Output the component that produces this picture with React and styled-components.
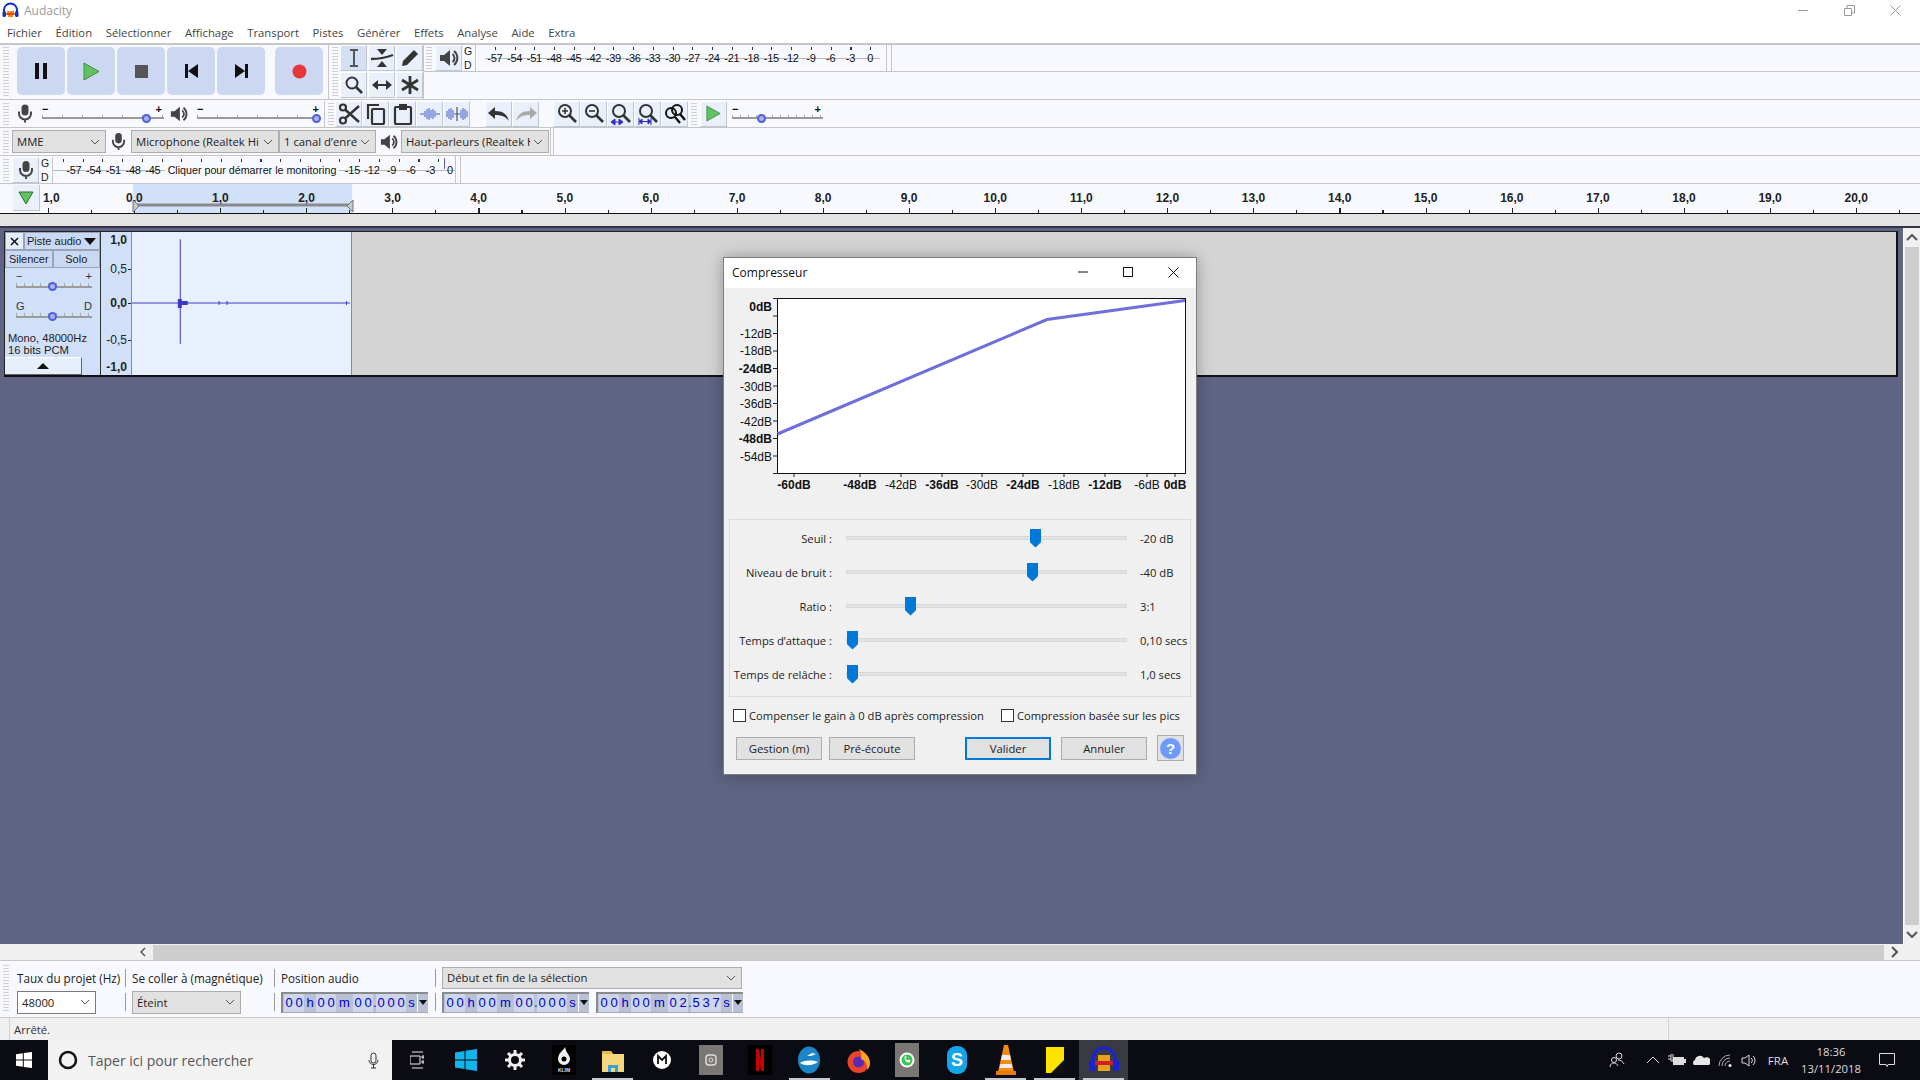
import React from "react";
import styled, { createGlobalStyle } from "styled-components";

const UI = `"Open Sans", "Noto Sans", sans-serif`;
const AR = `"Liberation Sans", Arial, sans-serif`;

const Global = createGlobalStyle`
  html, body { margin: 0; padding: 0; background: #f8f9ff; overflow: hidden; }
  #root { width: 1920px; height: 1080px; }
  * { box-sizing: border-box; }
`;

const Page = styled.div`
  position: relative; width: 1920px; height: 1080px; overflow: hidden;
  display: flex; flex-direction: column; background: #fff; font-family: ${UI}; color: #111;
`;
const TitleBar = styled.div`
  height: 21px; display: flex; align-items: center; padding-left: 2px; background: #fff; position: relative;
`;
const AppName = styled.span`margin-left: 5px; font-size: 12px; color: #999;`;
const WinControls = styled.div`
  margin-left: auto; display: flex; align-items: center; height: 20px; padding-right: 19px; gap: 35px;
`;
const MenuBar = styled.div`
  height: 22px; display: flex; align-items: center; padding-left: 7px; gap: 13.6px; background: #fff;
  font-size: 11.3px; color: #444;
`;
const MenuItem = styled.span`white-space: nowrap;`;

const TopRows = styled.div`
  height: 57px; display: flex; background: #f8f9ff; border-top: 2px solid #c6c6c6; border-bottom: 1px solid #c6c6c6;
`;
const Group = styled.div`
  width: ${p => p.$w ? p.$w + "px" : "auto"}; flex: ${p => p.$w ? "none" : 1};
  display: flex; align-items: ${p => p.$align || "flex-start"}; padding-left: ${p => p.$pl || 0}px;
  padding-top: ${p => p.$pt || 0}px; border-right: ${p => p.$edge ? "1px solid #c6c6c6" : "none"};
`;
const Grip = styled.div`
  flex: none; width: 6px; margin-left: ${p => p.$ml ?? 3}px; height: ${p => p.$h || 22}px;
  align-self: center;
  background: repeating-linear-gradient(to bottom, #cfcfcf 0 1px, transparent 1px 3px);
`;
const TransportBtn = styled.div`
  flex: none; width: 48px; height: 48px; margin-left: ${p => p.$ml ?? 2}px; margin-top: 2px;
  border-radius: 5px; background: #ccd8f1; display: flex; align-items: center; justify-content: center;
`;
const ToolGrid = styled.div`
  display: grid; grid-template-columns: repeat(3, 27px); grid-auto-rows: 26px; gap: 1px; margin-left: 2px;
`;
const Btn = styled.div`
  flex: none; width: ${p => p.$w || 27}px; height: ${p => p.$h || 26}px; margin-left: ${p => p.$ml || 0}px;
  display: flex; align-items: center; justify-content: center;
  background: ${p => p.$on ? "#d3dff3" : "#eaf0fb"};
  border-right: 1px solid #c0c5d2; border-bottom: 1px solid #c0c5d2; border-top: 1px solid #fff; border-left: 1px solid #fff;
`;
const MeterColumn = styled.div`flex: 1; display: flex; flex-direction: column;`;
const MeterRow = styled.div`
  height: 27px; display: flex; border-bottom: 1px solid #c6c6c6; align-items: flex-start;
`;
const GD = styled.div`
  flex: none; width: 12px; margin-left: ${p => p.$ml ?? 2}px; height: 26px; display: flex; flex-direction: column;
  justify-content: space-between; font: 10.5px/12px ${AR}; color: #222; border-right: 1px solid #c6c6c6;
`;
const Scale = styled.div`
  position: relative; flex: none; width: ${p => p.$w}px; height: 26px; margin-left: ${p => p.$ml || 0}px;
  padding-left: ${p => p.$pl || 0}px;
  display: flex; align-items: center;
  background:
    linear-gradient(#b8b8b8, #b8b8b8) 0 13px / 100% 1px no-repeat,
    repeating-linear-gradient(to right, #333 0 1px, transparent 1px 19.75px) 10px 2px / 100% 3px no-repeat;
`;
const ScaleMark = styled.span`
  flex: none; width: ${p => p.$w || 19.75}px; text-align: center; font: 11px/12px ${AR}; letter-spacing: -0.2px; color: #111;
`;
const DoubleDivider = styled.div`
  flex: none; width: ${p => p.$w || 6}px; margin-left: ${p => p.$ml ?? 2}px; height: 100%;
  border-left: 1px solid #c6c6c6; border-right: 1px solid #c6c6c6;
`;
const ToolRow = styled.div`
  height: 28px; display: flex; align-items: center; background: #f8f9ff; border-bottom: 1px solid #c6c6c6;
`;
const IconSlot = styled.div`
  flex: none; display: flex; align-items: center; justify-content: center;
  width: ${p => p.$w}px; margin-left: ${p => p.$ml || 0}px;
`;
const MiniSlider = styled.div`
  position: relative; flex: none; width: ${p => p.$w}px; height: 20px; margin-left: ${p => p.$ml || 0}px;
`;
const MiniRail = styled.div`
  position: absolute; left: 0; right: 0; top: ${p => p.$t ?? 13}px; height: 2px; background: #9a9a9a;
`;
const MiniTicks = styled.div`
  position: absolute; left: 0; right: 0; top: ${p => p.$t ?? 11}px; height: ${p => p.$h || 2}px;
  background: repeating-linear-gradient(to right, #aaa 0 1px, transparent 1px ${p => p.$step || 10}px);
`;
const MiniSign = styled.span`
  position: absolute; top: 0; ${p => p.$right ? "right: 2px" : "left: 0"}; font: 700 11px/11px ${AR}; color: #111;
`;
const MiniThumb = styled.div`
  position: absolute; left: ${p => p.$x}px; top: ${p => p.$t ?? 10}px; width: 9px; height: 9px; border-radius: 50%;
  background: #aab0e8; border: 2.5px solid #4d5fe0;
`;
const VLine = styled.div`
  flex: none; width: 1px; height: ${p => p.$h || 26}px; background: #c6c6c6; margin-left: ${p => p.$ml || 0}px;
`;
const Combo = styled.div`
  flex: none; width: ${p => p.$w}px; height: ${p => p.$h || 23}px; margin-left: ${p => p.$ml || 0}px;
  display: flex; align-items: center; padding: 0 4px; font-size: 11.3px; color: #222;
  background: ${p => p.$white ? "#fff" : "#e1e1e1"};
  border: 1px solid ${p => p.$white ? "#7a7a7a" : "#adadad"};
`;
const ComboText = styled.span`flex: 1; min-width: 0; overflow: hidden; white-space: nowrap;`;
const Chevron = () => (
  <svg width="10" height="6" viewBox="0 0 10 6" style={{ flex: "none", marginLeft: 3, marginRight: 1 }}>
    <path d="M1 1l4 4 4-4" fill="none" stroke="#555" />
  </svg>
);
const ComboBox = ({ children, ...r }) => <Combo {...r}><ComboText>{children}</ComboText><Chevron /></Combo>;

const MonitorTip = styled.span`
  position: absolute; left: 112px; top: 5px; height: 16px; width: 174px; background: #f8f9ff;
  font: 10.7px/17px ${AR}; color: #111; text-align: center; white-space: nowrap;
`;
const MonitorPeak = styled.div`position: absolute; left: 391px; top: 1px; width: 1px; height: 11px; background: #5a5ae0;`;

const Ruler = styled.div`
  position: relative; height: 30px; background: #f8f9ff; border-bottom: 1px solid #111;
  display: grid; grid-template-columns: repeat(22, 86.1px); padding-left: 5.2px; align-items: start;
  &::after {
    content: ""; position: absolute; left: 48px; right: 0; bottom: 0; height: 5px;
    background:
      repeating-linear-gradient(to right, #222 0 1px, transparent 1px 86.1px) 0 0 / 100% 5px no-repeat,
      repeating-linear-gradient(to right, #222 0 1px, transparent 1px 86.1px) 43px 2px / 100% 3px no-repeat;
  }
`;
const RulerMark = styled.span`
  position: relative; z-index: 1; text-align: center; font: 700 12px/14px ${AR}; color: #222; padding-top: 7px; height: 21px;
  padding-left: ${p => p.$shift || 0}px;
`;
const RulerSel = styled.div`
  position: absolute; left: 133px; top: 0; width: 219px; bottom: 0; background: #d2e1fa;
`;
const RulerBtn = styled.div`
  position: absolute; z-index: 2; left: 13px; top: 1px; width: 27px; height: 26px; background: #eaf0fb;
  border-right: 1px solid #c0c5d2; border-bottom: 1px solid #c0c5d2; display: flex; align-items: center; justify-content: center;
`;
const RulerRange = styled.svg`position: absolute; z-index: 2; left: 132px; top: 15px;`;
const GrayStrip = styled.div`height: 14px; background: #e3e3e3; border-bottom: 2px solid #32344a;`;

const Workspace = styled.div`flex: 1; display: flex; background: #5f6484; min-height: 0;`;
const TrackArea = styled.div`flex: 1; padding: 3px 5px 0 4px; border-right: 1px solid #fff;`;
const Track = styled.div`
  height: 146px; display: flex; background: #d4d4d4;
  border-top: 1px solid #222; border-left: 1px solid #222; border-bottom: 2px solid #111; border-right: 2px solid #111;
`;
const TrackPanel = styled.div`
  flex: none; width: 96px; background: #cfe0f8; border-right: 1px solid #333; display: flex; flex-direction: column;
  font: 11px/13px ${AR}; color: #222;
`;
const PanelTop = styled.div`display: flex; height: 18px;`;
const PanelClose = styled.div`
  flex: none; width: 19px; display: flex; align-items: center; justify-content: center; border: 1px solid #9aa4b8;
  background: #e3edfb;
`;
const PanelName = styled.div`
  flex: 1; display: flex; align-items: center; padding: 0 3px 0 2px; background: #c9d9f3; border: 1px solid #9aa4b8;
`;
const NameText = styled.span`flex: 1;`;
const PanelButtons = styled.div`display: flex; height: 18px;`;
const PanelBtn = styled.div`
  flex: 1; display: flex; align-items: center; justify-content: center; background: #c9d9f3; border: 1px solid #9aa4b8;
`;
const PanelRange = styled.div`position: relative; height: 29px; margin-left: 11px; width: 76px;`;
const RangeMark = styled.span`position: absolute; top: ${p => p.$t ?? 0}px; ${p => p.$right ? "right: 0" : "left: 0"}; font: 11px/11px ${AR}; color: #333;`;
const PanelInfo = styled.div`font-size: 11.2px; line-height: 12px; padding-left: 3px; margin-top: 6px;`;
const Collapse = styled.div`
  width: 77px; height: 18px; margin-top: auto; background: #e6effc; border-top: 1px solid #fff; border-right: 1px solid #666; border-bottom: 1px solid #666;
  display: flex; align-items: center; justify-content: center;
`;
const VRuler = styled.div`
  flex: none; width: 31px; background: #cfe0f8; border-right: 1px solid #8a8a8a; display: flex; flex-direction: column;
`;
const VMark = styled.span`
  margin-top: ${p => p.$mt}px; font: ${p => p.$b ? 700 : 400} 12px/14px ${AR}; color: #222; white-space: nowrap;
  height: 14px; display: flex; justify-content: flex-end; align-items: center;
`;
const VTick = styled.i`
  flex: none; width: 3px; height: 1px; margin-left: 1px; background: ${p => p.$on ? "#222" : "transparent"};
`;
const Wave = styled.svg`flex: none; display: block; background: #e8f0fd; border-right: 1px solid #8a8a8a;`;

const VScroll = styled.div`
  flex: none; width: 16px; background: #f0f0f0; display: flex; flex-direction: column; align-items: center;
  padding: 6px 0;
`;
const VThumb = styled.div`flex: 1; width: 14px; background: #cdcdcd; margin: 6px 0;`;
const HScroll = styled.div`
  height: 16px; flex: none; background: #f0f0f0; display: flex; align-items: center; padding-left: 140px; padding-right: 22px;
`;
const HThumb = styled.div`flex: 1; height: 15px; margin: 0 7px; background: #cdcdcd;`;

const SelectionBar = styled.div`
  height: 58px; flex: none; display: flex; background: #f8f9ff; border-top: 1px solid #c6c6c6; border-bottom: 1px solid #c6c6c6;
`;
const SelGrip = styled(Grip)`height: 48px; margin-left: 3px;`;
const SelCols = styled.div`
  display: grid; grid-template-columns: 108px 1px 6px 109px 33px 1px 6px 154px 1px 6px 300px; grid-template-rows: 25px 24px;
  margin-left: 8px; align-items: center; padding-top: 4px;
`;
const SelLabel = styled.span`font-size: 11.7px; white-space: nowrap; color: #222; grid-column: ${p => p.$c};`;
const SelSep = styled.div`width: 1px; height: 18px; background: #9a9a9a; grid-column: ${p => p.$c};`;
const SelCell = styled.div`grid-column: ${p => p.$c}; display: flex; gap: 7px;`;
const TimeBox = styled.div`
  flex: none; width: 147px; height: 21px; display: flex; align-items: stretch; background: #b8c1d6;
  border-top: 2px solid #8a8a8a; border-left: 2px solid #8a8a8a; border-bottom: 1px solid #aaa; padding-left: 1px;
`;
const TimeChar = styled.span`
  flex: none; width: ${p => p.$w}px; text-align: center; font: 13px/18px ${AR}; color: #0000c4;
  background: ${p => p.$digit ? "#ced6ea" : "transparent"};
`;
const TimeArrow = styled.div`
  flex: 1; display: flex; align-items: center; justify-content: center; background: #b8c1d6; border-left: 1px solid #fff;
`;
const StatusBar = styled.div`
  height: 22px; flex: none; display: flex; align-items: center; background: #f0f0f0; font-size: 11.3px; color: #333;
`;
const StatusCell = styled.div`
  width: ${p => p.$w}px; margin-left: ${p => p.$ml || 0}px; height: 100%; display: flex; align-items: center; padding-left: 4px;
  border-left: 1px solid #d2d2d2;
`;

const Taskbar = styled.div`
  height: 40px; flex: none; display: flex; background: #0b0b14; color: #eee;
`;
const StartBtn = styled.div`flex: none; width: 48px; display: flex; align-items: center; justify-content: center;`;
const SearchBox = styled.div`
  flex: none; width: 344px; background: #f2f2f2; display: flex; align-items: center; padding: 0 13px 0 10px; color: #555; font-size: 14px;
`;
const SearchText = styled.span`flex: 1; margin-left: 10px; white-space: nowrap;`;
const TaskCell = styled.div`
  position: relative; flex: none; width: 49.1px; display: flex; align-items: center; justify-content: center;
  background: ${p => p.$cur ? "#3a3a42" : "transparent"};
  &::after {
    content: ""; display: ${p => p.$open ? "block" : "none"}; position: absolute; left: 4px; right: 4px; bottom: 0; height: 2px; background: #c8c8d0;
  }
`;
const Tray = styled.div`margin-left: auto; display: flex; align-items: center; padding-right: 13px;`;
const TrayCell = styled.div`
  flex: none; width: ${p => p.$w || 24}px; margin-left: ${p => p.$ml || 0}px; display: flex; align-items: center; justify-content: center; font-size: 11.5px; color: #ddd;
`;
const Clock = styled.div`
  flex: none; width: 72px; text-align: center; font-size: 11.3px; line-height: 17px; color: #ddd;
`;

const Dialog = styled.div`
  position: absolute; left: 723px; top: 257px; width: 474px; height: 518px; background: #f0f0f0;
  border: 1px solid #7e7e7e; box-shadow: 0 0 14px rgba(0,0,0,.3); display: flex; flex-direction: column;
`;
const DlgTitle = styled.div`
  height: 30px; flex: none; background: #fff; display: flex; align-items: center; padding: 0 17px 2px 8px; font-size: 12px; color: #111;
`;
const DlgName = styled.span`flex: 1;`;
const DlgControls = styled.div`display: flex; align-items: center; gap: 35px;`;
const Chart = styled.svg`display: block; flex: none; font-family: ${AR};`;
const SliderBox = styled.div`
  flex: none; margin: 25px 5px 0 5px; height: 178px; border: 1px solid #dcdcdc; padding-top: 1px;
`;
const SliderRow = styled.div`
  height: 34px; display: grid; grid-template-columns: 102px 281px auto; column-gap: 14px; align-items: center;
  font-size: 11.2px; color: #222;
`;
const SliderLabel = styled.span`text-align: right; white-space: nowrap;`;
const SliderTrack = styled.div`
  position: relative; height: 4px; margin-top: -1px; background: #e2e4e2; border: 1px solid #d8d8d8;
`;
const SliderThumb = styled.div`
  position: absolute; left: ${p => p.$x}px; top: -8px; width: 11px; height: 19px; background: #0078d7;
  clip-path: polygon(0 0, 100% 0, 100% 72%, 50% 100%, 0 72%);
`;
const SliderValue = styled.span`white-space: nowrap; margin-left: -1px;`;
const CheckRow = styled.div`
  flex: none; display: flex; align-items: center; height: 14px; margin: 11px 0 0 9px; font-size: 11.2px; color: #222;
`;
const CheckBox = styled.div`
  flex: none; width: 13px; height: 13px; background: #fff; border: 1px solid #333; margin-left: ${p => p.$ml || 0}px; margin-right: 3px;
`;
const DlgButtons = styled.div`flex: none; display: flex; align-items: center; margin: 13px 0 0 12px;`;
const DlgBtn = styled.div`
  flex: none; width: ${p => p.$w || 86}px; height: 23px; margin-left: ${p => p.$ml || 0}px; display: flex; align-items: center; justify-content: center;
  font-size: 11.3px; color: #222; background: #e1e1e1; border: ${p => p.$def ? "2px solid #0078d7" : "1px solid #adadad"};
`;
const HelpBtn = styled.div`
  flex: none; width: 27px; height: 26px; margin-left: 10px; background: #e1e1e1; border: 1px solid #adadad;
  display: flex; align-items: center; justify-content: center;
`;
const HelpDot = styled.div`
  width: 21px; height: 21px; border-radius: 50%; background: #6c9bfb; color: #fff; font: 700 15px/21px ${AR}; text-align: center;
`;

const Mic = ({ s = 20, c = "#444" }) => (
  <svg width={s * 0.8} height={s} viewBox="0 0 16 20">
    <rect x="4.5" y="1" width="7" height="11" rx="3.5" fill={c} />
    <path d="M2 8v2a6 6 0 0 0 12 0V8M8 16v3" fill="none" stroke={c} strokeWidth="2" />
  </svg>
);
const Speaker = ({ s = 20, c = "#444" }) => (
  <svg width={s} height={s} viewBox="0 0 20 20">
    <path d="M1 7h4l6-5v16l-6-5H1z" fill={c} />
    <path d="M13.5 6a5 5 0 0 1 0 8M15 3a9 9 0 0 1 0 14" fill="none" stroke={c} strokeWidth="2" />
  </svg>
);
const PlayIcon = ({ w = 17, h = 19 }) => (
  <svg width={w} height={h} viewBox="0 0 17 19">
    <path d="M1 1l15 8.5L1 18z" fill="#62c262" stroke="#3d8f3d" />
  </svg>
);
const AudacityLogo = ({ s = 17 }) => (
  <svg width={s} height={s} viewBox="0 0 17 17">
    <path d="M2 11V8a6.5 6.5 0 0 1 13 0v3" fill="none" stroke="#1030c8" strokeWidth="2" />
    <rect x="0.5" y="9" width="3.5" height="6" rx="1.5" fill="#1030c8" />
    <rect x="13" y="9" width="3.5" height="6" rx="1.5" fill="#1030c8" />
    <path d="M4 12h9M5 10h7M6 14h5" stroke="#f08a18" strokeWidth="2" />
    <path d="M5 12h7" stroke="#d22" strokeWidth="1.4" />
  </svg>
);

const transport = [
  <svg width="14" height="16" viewBox="0 0 14 16"><path d="M1 0h4v16H1zM9 0h4v16H9z" fill="#111" /></svg>,
  <PlayIcon />,
  <svg width="13" height="13"><rect width="13" height="13" fill="#555" /></svg>,
  <svg width="13" height="14" viewBox="0 0 13 14"><path d="M0 0h3v14H0zM13 0v14L3 7z" fill="#111" /></svg>,
  <svg width="13" height="14" viewBox="0 0 13 14"><path d="M10 0h3v14h-3zM0 0v14l10-7z" fill="#111" /></svg>,
  <svg width="15" height="15"><circle cx="7.5" cy="7.5" r="7" fill="#e6363c" /></svg>,
];
const dk = "#333";
const toolIcons = [
  <svg width="18" height="20" viewBox="0 0 18 20"><path d="M5 2h8M5 18h8M9 2v16" stroke="#555" strokeWidth="2" fill="none" /></svg>,
  <svg width="24" height="20" viewBox="0 0 24 20"><path d="M7 1h10l-5 6zM7 19h10l-5-6z" fill={dk} /><path d="M1 11c8 0 14-1 22-4" stroke={dk} strokeWidth="2.4" fill="none" /></svg>,
  <svg width="20" height="20" viewBox="0 0 20 20"><path d="M2 18l1-5L14 2l4 4L7 17z" fill={dk} /></svg>,
  <svg width="20" height="20" viewBox="0 0 20 20"><circle cx="8" cy="8" r="5.5" fill="none" stroke={dk} strokeWidth="2" /><path d="M12 12l6 6" stroke={dk} strokeWidth="2.6" /></svg>,
  <svg width="22" height="12" viewBox="0 0 22 12"><path d="M1 6l6-5v10zM21 6l-6-5v10z" fill={dk} /><path d="M5 6h12" stroke={dk} strokeWidth="2" /></svg>,
  <svg width="20" height="20" viewBox="0 0 20 20"><path d="M10 1v18M2 5l16 10M18 5L2 15" stroke={dk} strokeWidth="2.8" /></svg>,
];
const WaveA = () => (
  <svg width="20" height="16" viewBox="0 0 20 16"><path d="M0 8h4M16 8h4M5 5v6M7 3v10M9 2v12M11 4v8M13 3v10M15 5v6" stroke="#3c5cc8" fill="none" /></svg>
);
const WaveB = () => (
  <svg width="22" height="16" viewBox="0 0 22 16"><path d="M1 5v6M3 3v10M5 2v12M7 4v8M15 4v8M17 2v12M19 3v10M21 5v6M8 8h6" stroke="#3c5cc8" fill="none" /><path d="M11 1v14" stroke="#333" /></svg>
);
const Mag = ({ children, c = dk }) => (
  <svg width="22" height="22" viewBox="0 0 22 22">
    <circle cx="9" cy="8" r="6" fill="none" stroke={c} strokeWidth="2" />
    <path d="M13 12l7 7" stroke={c} strokeWidth="2.6" />
    {children}
  </svg>
);
const editIcons = [
  <svg width="22" height="22" viewBox="0 0 22 22"><circle cx="5" cy="4.5" r="3" fill="none" stroke={dk} strokeWidth="2.2" /><circle cx="5" cy="17.5" r="3" fill="none" stroke={dk} strokeWidth="2.2" /><path d="M7 6.5L21 19M7 15.500L21 3" stroke={dk} strokeWidth="2.4" /></svg>,
  <svg width="20" height="22" viewBox="0 0 20 22"><path d="M2 16V2h11" fill="none" stroke={dk} strokeWidth="2.2" /><rect x="6" y="6" width="12" height="15" rx="1" fill="none" stroke={dk} strokeWidth="2.2" /></svg>,
  <svg width="20" height="22" viewBox="0 0 20 22"><rect x="2" y="4" width="16" height="17" rx="1" fill="none" stroke={dk} strokeWidth="2.2" /><rect x="6" y="1" width="8" height="6" fill={dk} /></svg>,
  <WaveA />,
  <WaveB />,
];
const zoomIcons = [
  <Mag><path d="M6 8h6M9 5v6" stroke={dk} strokeWidth="1.6" /></Mag>,
  <Mag><path d="M6 8h6" stroke={dk} strokeWidth="1.6" /></Mag>,
  <Mag><path d="M1 19l4-3v6zM13 19l-4-3v6zM4 19h6" fill="#2a2ad0" stroke="#2a2ad0" /></Mag>,
  <Mag><path d="M2 15v7M14 15v7M2 18.500h12M2 18.500l3-2.500v5zM14 18.500l-3-2.500v5z" fill="#2a2ad0" stroke="#2a2ad0" /></Mag>,
  <svg width="22" height="22" viewBox="0 0 22 22"><circle cx="7" cy="10" r="5" fill="none" stroke="#111" strokeWidth="2" /><circle cx="13" cy="7" r="5" fill="none" stroke="#111" strokeWidth="2" /><path d="M16 11l5 6M11 14l5 6" stroke="#111" strokeWidth="2.4" /></svg>,
];

const meterLabels = [-57,-54,-51,-48,-45,-42,-39,-36,-33,-30,-27,-24,-21,-18,-15,-12,-9,-6,-3,0];
const rulerLabels = Array.from({ length: 22 }, (_, i) => `${Math.abs(i - 1)},0`);
const charWidth = c => ({ h: 12, m: 17, ".": 3, s: 11 }[c] || 10);

const TimeField = ({ value }) => (
  <TimeBox>
    {value.split("").map((c, i) => <TimeChar key={i} $w={charWidth(c)} $digit={/\d/.test(c)}>{c}</TimeChar>)}
    <TimeArrow><svg width="8" height="5"><path d="M0 0h8L4 5z" fill="#111" /></svg></TimeArrow>
  </TimeBox>
);

const Range = ({ a, b, x, t }) => (
  <PanelRange>
    <RangeMark $t={t}>{a}</RangeMark>
    <RangeMark $t={t} $right>{b}</RangeMark>
    <MiniRail $t={15 + t} />
    <MiniTicks $step={8} $t={12 + t} $h={3} />
    <MiniThumb $x={x} $t={11 + t} />
  </PanelRange>
);

const sliders = [
  ["Seuil :", 183, "-20 dB"],
  ["Niveau de bruit :", 180, "-40 dB"],
  ["Ratio :", 58, "3:1"],
  ["Temps d’attaque :", 0, "0,10 secs"],
  ["Temps de relâche :", 0, "1,0 secs"],
];
const yLabels = [["0dB",307,1],["-12dB",334],["-18dB",351],["-24dB",369,1],["-30dB",387],["-36dB",404],["-42dB",422],["-48dB",439,1],["-54dB",457]];
const xLabels = [["-60dB",794,1],["-48dB",860,1],["-42dB",901],["-36dB",942,1],["-30dB",982],["-24dB",1023,1],["-18dB",1064],["-12dB",1105,1],["-6dB",1147],["0dB",1175,1]];

const Compressor = () => (
  <Dialog>
    <DlgTitle>
      <DlgName>Compresseur</DlgName>
      <DlgControls>
        <svg width="10" height="10"><path d="M0 5h10" stroke="#111" /></svg>
        <svg width="10" height="10"><rect x=".5" y=".5" width="9" height="9" fill="none" stroke="#111" /></svg>
        <svg width="11" height="11"><path d="M.5.5l10 10M10.500.5l-10 10" stroke="#111" /></svg>
      </DlgControls>
    </DlgTitle>
    <Chart width="472" height="206" viewBox="724 288 472 206">
      <rect x="777.500" y="298.500" width="408" height="175" fill="#fff" stroke="#111" />
      {Array.from({ length: 11 }, (_, i) => <path key={i} d={`M773 ${298.500 + i * 17.5}h4`} stroke="#222" />)}
      {xLabels.map(([t, x]) => <path key={t} d={`M${x} 474v3`} stroke="#222" />)}
      <polyline points="777.500,434 1047,319.500 1185,300.500" fill="none" stroke="#6f6fdc" strokeWidth="3" />
      {yLabels.map(([t, y, b]) => <text key={t} x="772" y={y + 4} textAnchor="end" fontSize="12" fontWeight={b ? 700 : 400} fill="#111">{t}</text>)}
      {xLabels.map(([t, x, b]) => <text key={t} x={x} y="489" textAnchor="middle" fontSize="12" fontWeight={b ? 700 : 400} fill="#111">{t}</text>)}
    </Chart>
    <SliderBox>
      {sliders.map(([l, x, v]) => (
        <SliderRow key={l}>
          <SliderLabel>{l}</SliderLabel>
          <SliderTrack><SliderThumb $x={x} /></SliderTrack>
          <SliderValue>{v}</SliderValue>
        </SliderRow>
      ))}
    </SliderBox>
    <CheckRow>
      <CheckBox />Compenser le gain à 0 dB après compression
      <CheckBox $ml={17} />Compression basée sur les pics
    </CheckRow>
    <DlgButtons>
      <DlgBtn>Gestion (m)</DlgBtn>
      <DlgBtn $ml={7}>Pré-écoute</DlgBtn>
      <DlgBtn $ml={50} $def>Valider</DlgBtn>
      <DlgBtn $ml={10}>Annuler</DlgBtn>
      <HelpBtn><HelpDot>?</HelpDot></HelpBtn>
    </DlgButtons>
  </Dialog>
);

const taskIcons = [
  <svg width="14" height="18" viewBox="0 0 14 18"><path d="M2 1h11M2 17h11M0 5h10v8H0zM12 5h2v2h-2zM12 10h2v2h-2z" fill="none" stroke="#eee" /></svg>,
  <svg width="22" height="22" viewBox="0 0 22 22"><path d="M0 3.500l9.500-1.500v8.500H0zM10.500 1.800L22 0v10.500H10.500zM0 11.500h9.500V20L0 18.500zM10.500 11.500H22V22l-11.500-1.800z" fill="#12b5ea" /></svg>,
  <svg width="20" height="20" viewBox="0 0 20 20"><circle cx="10" cy="10" r="5.500" fill="none" stroke="#eee" strokeWidth="3" /><path d="M10 0v4M10 16v4M0 10h4M16 10h4M3 3l3 3M14 14l3 3M17 3l-3 3M6 14l-3 3" stroke="#eee" strokeWidth="3" /></svg>,
  <svg width="24" height="30" viewBox="0 0 24 30"><rect width="24" height="30" rx="3" fill="#000" /><path d="M13 2c-2 4-7 6-7 12a6 6 0 0 0 12 0c0-4-4-6-5-12z" fill="#eee" /><circle cx="12" cy="14" r="2.500" fill="#000" /><text x="12" y="27" textAnchor="middle" fontSize="5" fontWeight="700" fill="#ddd" fontFamily="Liberation Sans">KLIM</text></svg>,
  <svg width="22" height="24" viewBox="0 0 22 24"><path d="M0 3h9l2 3h11v18H0z" fill="#f5d77e" /><path d="M0 3h9l2 3H0z" fill="#e8b93c" /><path d="M6 17h10v7H6z" fill="#3aa0da" /><path d="M9 20h4v4H9z" fill="#f5d77e" /></svg>,
  <svg width="18" height="18" viewBox="0 0 18 18"><circle cx="9" cy="9" r="9" fill="#fff" /><path d="M5 13V5l4 4 4-4v8" fill="none" stroke="#111" strokeWidth="1.800" /></svg>,
  <svg width="24" height="30" viewBox="0 0 24 30"><rect width="24" height="30" fill="#7a7674" /><rect x="7" y="10" width="10" height="10" rx="3" fill="none" stroke="#ddd" strokeWidth="1.400" /><circle cx="12" cy="15" r="2" fill="none" stroke="#ddd" /></svg>,
  <svg width="24" height="30" viewBox="0 0 24 30"><rect width="24" height="30" fill="#000" /><path d="M8 4h3l2 12V4h3v22h-3l-2-12v12H8z" fill="#c8000a" /></svg>,
  <svg width="22" height="28" viewBox="0 0 22 28"><ellipse cx="11" cy="14" rx="11" ry="13.500" fill="#1a86c8" /><path d="M2 17c5-3 12-3 18-1-4 3-12 5-18 1zM9 10l5-3 4 1-5 2z" fill="#fff" /></svg>,
  <svg width="23" height="25" viewBox="0 0 23 25"><circle cx="11.500" cy="14" r="11" fill="#e8452c" /><circle cx="11.500" cy="14" r="5.500" fill="#5b2bb8" /><path d="M12 1c6 3 11 8 11 14 0 3-1 5-3 7 1-5-1-9-6-11 1-3 0-7-2-10z" fill="#f7a521" /></svg>,
  <svg width="24" height="34" viewBox="0 0 24 34"><rect width="24" height="34" fill="#7a7674" /><circle cx="12" cy="17" r="7.500" fill="#fff" /><circle cx="12" cy="17" r="5.500" fill="#3cc65a" /><path d="M9.500 14.500c0 3 2 5 5 5l1-2-2-1-1 1-2-2 1-1-1-2z" fill="#fff" /></svg>,
  <svg width="22" height="30" viewBox="0 0 22 30"><rect x="1" y="1" width="20" height="28" rx="9" fill="#12a5e8" /><text x="11" y="21" textAnchor="middle" fontSize="18" fontWeight="700" fill="#fff" fontFamily="Liberation Sans">S</text></svg>,
  <svg width="20" height="32" viewBox="0 0 20 32"><path d="M8 1h4l6 27H2z" fill="#f48c12" /><path d="M6 11h8l1 5H5zM4.500 20h11l1 4h-13z" fill="#eee" /><path d="M0 27h20v4H0z" fill="#e57a0e" /></svg>,
  <svg width="18" height="26" viewBox="0 0 18 26"><rect width="18" height="26" fill="#fce300" /><path d="M18 13v13H5z" fill="#111" /></svg>,
  <svg width="32" height="32" viewBox="0 0 32 32"><path d="M5 20v-5a11 11 0 0 1 22 0v5" fill="none" stroke="#1a22d8" strokeWidth="3" /><rect x="1" y="16" width="6" height="11" rx="2" fill="#1a22d8" /><rect x="25" y="16" width="6" height="11" rx="2" fill="#1a22d8" /><path d="M10 11h12v16H10z" fill="#e8a020" /><path d="M7 19h18" stroke="#d02020" strokeWidth="4" /></svg>,
];
const tray = [
  <svg width="16" height="16" viewBox="0 0 16 16"><circle cx="10" cy="4" r="3" fill="none" stroke="#ddd" /><circle cx="5" cy="8" r="2.500" fill="none" stroke="#ddd" /><path d="M1 15c0-3 2-4 4-4s3 1 4 3M9 8c3 0 5 2 6 4" fill="none" stroke="#ddd" /></svg>,
  <svg width="14" height="8" viewBox="0 0 14 8"><path d="M1 7l6-6 6 6" fill="none" stroke="#ddd" /></svg>,
  <svg width="18" height="12" viewBox="0 0 18 12"><path d="M0 2h3M0 5h3M3 0v7h2V0" stroke="#ddd" fill="none" /><rect x="5" y="3" width="11" height="8" fill="#ddd" /><path d="M16 5h2v4h-2z" fill="#ddd" /></svg>,
  <svg width="17" height="10" viewBox="0 0 17 10"><path d="M1 10a3 3 0 0 1 1-5 5 5 0 0 1 9-2 4 4 0 0 1 5 7z" fill="#e6e6e6" /></svg>,
  <svg width="14" height="13" viewBox="0 0 14 13"><path d="M1 12A11 11 0 0 1 12 1M4 12a8 8 0 0 1 8-8M7 12a5 5 0 0 1 5-5" fill="none" stroke="#aaa" /><circle cx="12" cy="11.500" r="1.500" fill="#eee" /></svg>,
  <svg width="16" height="13" viewBox="0 0 16 13"><path d="M1 4h3l4-3v11L4 9H1z" fill="none" stroke="#ddd" /><path d="M10 4a3 3 0 0 1 0 5M12 2a6 6 0 0 1 0 9" fill="none" stroke="#ddd" /></svg>,
];

export default function App() {
  return (
    <Page>
      <Global />
      <TitleBar>
        <AudacityLogo />
        <AppName>Audacity</AppName>
        <WinControls>
          <svg width="11" height="11"><path d="M0 5.500h10" stroke="#999" /></svg>
          <svg width="11" height="11"><path d="M.5 3.500h7v7h-7zM3 3V.5h7.500V8H8" fill="none" stroke="#999" /></svg>
          <svg width="11" height="11"><path d="M.5.5l10 10M10.500.5l-10 10" stroke="#999" /></svg>
        </WinControls>
      </TitleBar>
      <MenuBar>
        {["Fichier","Édition","Sélectionner","Affichage","Transport","Pistes","Générer","Effets","Analyse","Aide","Extra"].map(m => <MenuItem key={m}>{m}</MenuItem>)}
      </MenuBar>

      <TopRows>
        <Group $w={329} $edge>
          <Grip $h={50} />
          {transport.map((ic, i) => <TransportBtn key={i} $ml={i === 0 ? 8 : i === 5 ? 10 : 2}>{ic}</TransportBtn>)}
        </Group>
        <Group $w={95} $edge>
          <Grip $h={50} />
          <ToolGrid>
            {toolIcons.map((ic, i) => <Btn key={i} $on={i === 0} $w={27} $h={26}>{ic}</Btn>)}
          </ToolGrid>
        </Group>
        <MeterColumn>
          <MeterRow>
            <Grip $h={22} $ml={2} />
            <Btn $ml={3}><Speaker s={20} /></Btn>
            <GD><span>G</span><span>D</span></GD>
            <Scale $w={395} $ml={9}>
              {meterLabels.map(n => <ScaleMark key={n}>{n}</ScaleMark>)}
            </Scale>
            <DoubleDivider $ml={6} />
          </MeterRow>
        </MeterColumn>
      </TopRows>

      <ToolRow>
        <Grip />
        <IconSlot $w={16} $ml={8}><Mic s={21} /></IconSlot>
        <MiniSlider $w={122} $ml={9}>
          <MiniSign>−</MiniSign><MiniSign $right>+</MiniSign>
          <MiniRail /><MiniTicks $step={20} /><MiniThumb $x={100} />
        </MiniSlider>
        <IconSlot $w={18} $ml={6}><Speaker s={18} /></IconSlot>
        <MiniSlider $w={124} $ml={9}>
          <MiniSign>−</MiniSign><MiniSign $right>+</MiniSign>
          <MiniRail /><MiniTicks $step={20} /><MiniThumb $x={115} />
        </MiniSlider>
        <VLine $ml={3} />
        <Grip />
        <Btn $ml={1}>{editIcons[0]}</Btn>
        {editIcons.slice(1).map((ic, i) => <Btn key={i}>{ic}</Btn>)}
        <Btn $ml={15}><svg width="22" height="14" viewBox="0 0 22 14"><path d="M0 6l7-6v4c8 0 12 3 14 10-3-4-7-6-14-6v4z" fill={dk} /></svg></Btn>
        <Btn><svg width="22" height="14" viewBox="0 0 22 14"><path d="M22 6l-7-6v4C7 4 3 7 1 14c3-4 7-6 14-6v4z" fill="#aaa" /></svg></Btn>
        <Btn $ml={14}>{zoomIcons[0]}</Btn>
        {zoomIcons.slice(1).map((ic, i) => <Btn key={i}>{ic}</Btn>)}
        <Grip />
        <Btn $ml={3}><PlayIcon w={15} h={17} /></Btn>
        <MiniSlider $w={91} $ml={5}>
          <MiniSign>−</MiniSign><MiniSign $right>+</MiniSign>
          <MiniRail /><MiniTicks $step={8} /><MiniThumb $x={25} />
        </MiniSlider>
      </ToolRow>

      <ToolRow>
        <Grip />
        <ComboBox $w={94} $ml={3}>MME</ComboBox>
        <IconSlot $w={15} $ml={5}><Mic s={19} /></IconSlot>
        <ComboBox $w={148} $ml={5}>Microphone (Realtek Hi</ComboBox>
        <ComboBox $w={97}>1 canal d’enre</ComboBox>
        <IconSlot $w={19} $ml={3}><Speaker s={18} /></IconSlot>
        <ComboBox $w={148} $ml={3}>Haut-parleurs (Realtek H</ComboBox>
        <DoubleDivider $ml={1} $w={4} />
      </ToolRow>

      <ToolRow>
        <Grip />
        <Btn $ml={3}><Mic s={20} /></Btn>
        <GD $ml={2}><span>G</span><span>D</span></GD>
        <Scale $w={402} $pl={11}>
          {meterLabels.slice(0, 5).map(n => <ScaleMark key={n}>{n}</ScaleMark>)}
          <MonitorTip>Cliquer pour démarrer le monitoring</MonitorTip>
          <ScaleMark $w={180} />
          {meterLabels.slice(14).map(n => <ScaleMark key={n} $w={19.5}>{n}</ScaleMark>)}
          <MonitorPeak />
        </Scale>
        <DoubleDivider $ml={0} />
      </ToolRow>

      <Ruler>
        <RulerSel />
        <RulerBtn><svg width="16" height="14" viewBox="0 0 16 14"><path d="M1 1h14L8 13z" fill="#62c262" stroke="#2d6b2d" /></svg></RulerBtn>
        <RulerRange width="222" height="14" viewBox="0 0 222 14">
          <path d="M5 6h212" stroke="#8a8a8a" strokeWidth="3" />
          <path d="M1 1v12l6-6zM221 1v12l-6-6z" fill="#c8c8c8" stroke="#777" />
        </RulerRange>
        {rulerLabels.map((l, i) => <RulerMark key={i} $shift={i === 0 ? 6 : 0}>{l}</RulerMark>)}
      </Ruler>
      <GrayStrip />

      <Workspace>
        <TrackArea>
          <Track>
            <TrackPanel>
              <PanelTop>
                <PanelClose><svg width="9" height="9"><path d="M1 1l7 7M8 1L1 8" stroke="#111" strokeWidth="1.500" /></svg></PanelClose>
                <PanelName><NameText>Piste audio</NameText><svg width="12" height="7"><path d="M0 0h12L6 7z" fill="#111" /></svg></PanelName>
              </PanelTop>
              <PanelButtons><PanelBtn>Silencer</PanelBtn><PanelBtn>Solo</PanelBtn></PanelButtons>
              <Range a="−" b="+" x={32} t={3} />
              <Range a="G" b="D" x={32} t={4} />
              <PanelInfo>Mono, 48000Hz<br />16 bits PCM</PanelInfo>
              <Collapse><svg width="12" height="6"><path d="M0 6h12L6 0z" fill="#111" /></svg></Collapse>
            </TrackPanel>
            <VRuler>
              <VMark $mt={1} $b>1,0<VTick /></VMark>
              <VMark $mt={15}>0,5<VTick $on /></VMark>
              <VMark $mt={20} $b>0,0<VTick $on /></VMark>
              <VMark $mt={23}>-0,5<VTick $on /></VMark>
              <VMark $mt={13} $b>-1,0<VTick /></VMark>
            </VRuler>
            <Wave width="220" height="143" viewBox="0 0 220 143">
              <path d="M0 71h219" stroke="#3a3ac8" />
              <path d="M48.500 7v105" stroke="#3a3ac8" />
              <path d="M46 67h4v9h-4zM50 69h6v4h-6z" fill="#3a3ac8" />
              <path d="M87.500 69v4M95.500 69v4M215.500 69v4" stroke="#3a3ac8" />
            </Wave>
          </Track>
        </TrackArea>
        <VScroll>
          <svg width="12" height="7"><path d="M1 6l5-5 5 5" fill="none" stroke="#555" strokeWidth="2" /></svg>
          <VThumb />
          <svg width="12" height="7"><path d="M1 1l5 5 5-5" fill="none" stroke="#555" strokeWidth="2" /></svg>
        </VScroll>
      </Workspace>

      <HScroll>
        <svg width="6" height="10"><path d="M5 1L1 5l4 4" fill="none" stroke="#555" strokeWidth="1.500" /></svg>
        <HThumb />
        <svg width="7" height="12"><path d="M1 1l5 5-5 5" fill="none" stroke="#555" strokeWidth="2" /></svg>
      </HScroll>

      <SelectionBar>
        <SelGrip />
        <SelCols>
          <SelLabel $c={1}>Taux du projet (Hz)</SelLabel>
          <SelSep $c={2} />
          <SelLabel $c={4}>Se coller à (magnétique)</SelLabel>
          <SelSep $c={6} />
          <SelLabel $c={8}>Position audio</SelLabel>
          <SelSep $c={9} />
          <SelCell $c={11}><ComboBox $w={300} $h={22}>Début et fin de la sélection</ComboBox></SelCell>
          <SelCell $c={1}><ComboBox $w={79} $white>48000</ComboBox></SelCell>
          <SelSep $c={2} />
          <SelCell $c={4}><ComboBox $w={109}>Éteint</ComboBox></SelCell>
          <SelSep $c={6} />
          <SelCell $c={8}><TimeField value="00h00m00.000s" /></SelCell>
          <SelSep $c={9} />
          <SelCell $c={11}>
            <TimeField value="00h00m00.000s" />
            <TimeField value="00h00m02.537s" />
          </SelCell>
        </SelCols>
      </SelectionBar>
      <StatusBar>
        <StatusCell $w={173} $ml={9}>Arrêté.</StatusCell>
        <StatusCell $w={79} $ml={1486} />
      </StatusBar>

      <Taskbar>
        <StartBtn><svg width="16" height="16" viewBox="0 0 16 16"><path d="M0 2.300l6.800-1v6.300H0zM7.800 1.100L16 0v7.600H7.800zM0 8.500h6.800v6.200l-6.800-1zM7.800 8.500H16V16l-8.200-1.100z" fill="#fff" /></svg></StartBtn>
        <SearchBox>
          <svg width="20" height="20"><circle cx="10" cy="10" r="8" fill="none" stroke="#111" strokeWidth="2.500" /></svg>
          <SearchText>Taper ici pour rechercher</SearchText>
          <svg width="11" height="17" viewBox="0 0 11 17"><rect x="3" y="1" width="5" height="10" rx="2.500" fill="none" stroke="#333" /><path d="M1 8a4.500 4.500 0 0 0 9 0M5.500 12v4M3 16h5" fill="none" stroke="#333" /></svg>
        </SearchBox>
        {taskIcons.map((ic, i) => <TaskCell key={i} $open={[4, 8, 12, 13, 14].includes(i)} $cur={i === 14}>{ic}</TaskCell>)}
        <Tray>
          <TrayCell $w={24}>{tray[0]}</TrayCell>
          <TrayCell $ml={12}>{tray[1]}</TrayCell>
          <TrayCell>{tray[2]}</TrayCell>
          <TrayCell>{tray[3]}</TrayCell>
          <TrayCell>{tray[4]}</TrayCell>
          <TrayCell>{tray[5]}</TrayCell>
          <TrayCell $w={34}>FRA</TrayCell>
          <Clock>18:36<br />13/11/2018</Clock>
          <TrayCell $w={40}><svg width="16" height="15" viewBox="0 0 16 15"><path d="M.5.500h15v11H9l-1 2-1-2H.5z" fill="none" stroke="#ddd" /></svg></TrayCell>
        </Tray>
      </Taskbar>

      <Compressor />
    </Page>
  );
}
